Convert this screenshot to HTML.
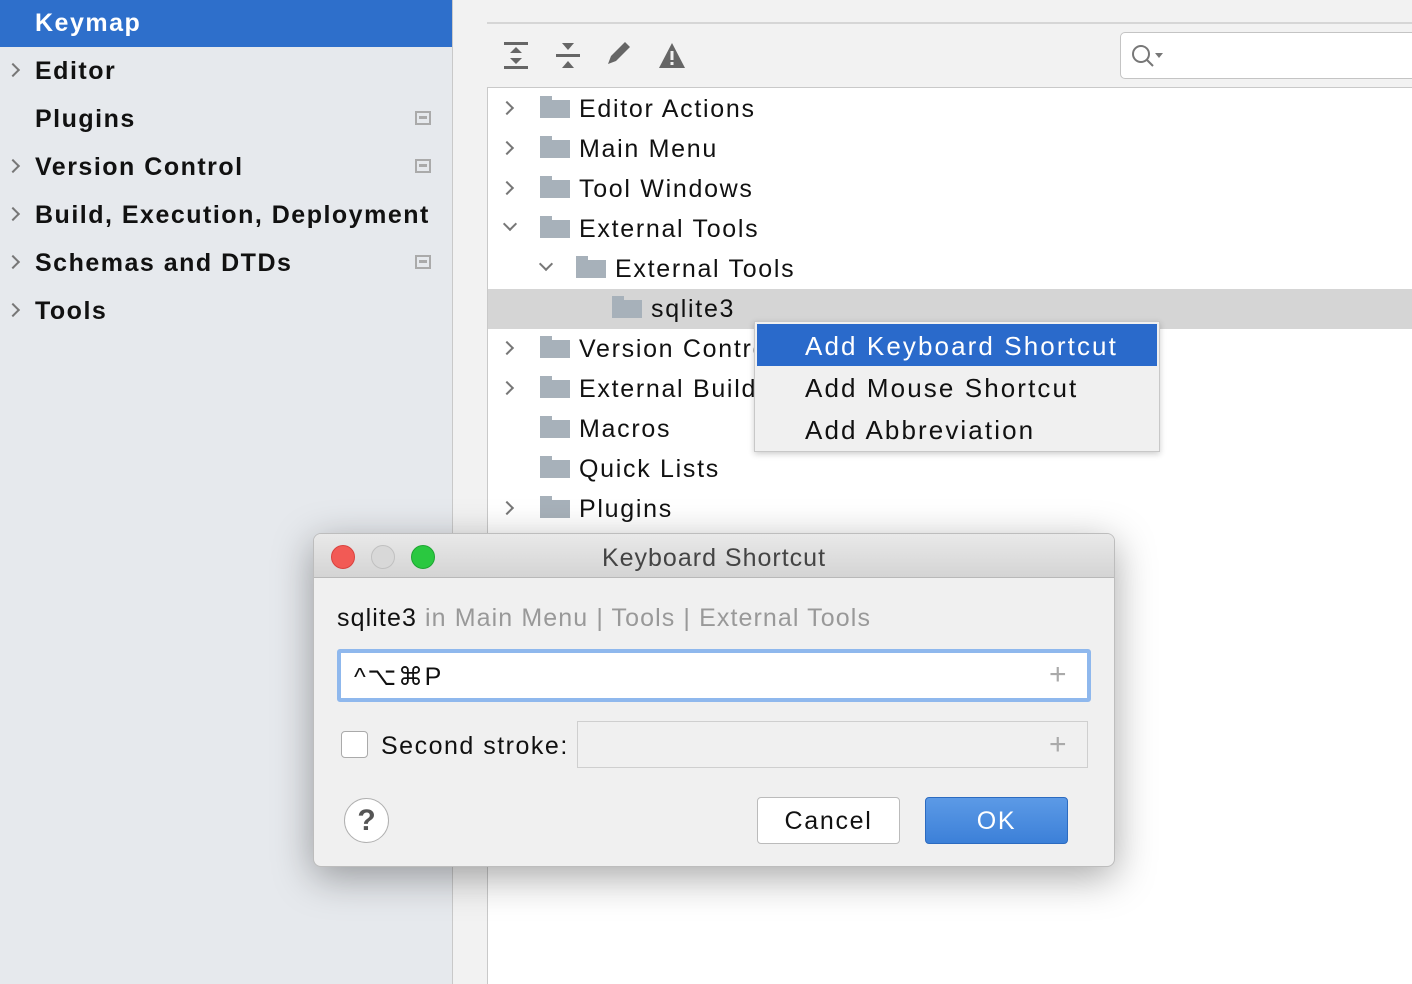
<!DOCTYPE html>
<html><head><meta charset="utf-8"><style>
*{margin:0;padding:0;box-sizing:border-box}
body{width:1412px;height:984px;overflow:hidden;background:#f2f2f2;font-family:"Liberation Sans","DejaVu Sans",sans-serif;position:relative}
.side{position:absolute;left:0;top:0;width:453px;height:984px;background:#e6e9ed;border-right:1px solid #c9c9c9}
.si{position:absolute;left:35px;font-size:25px;font-weight:bold;color:#111;letter-spacing:1.5px}
.arr{position:absolute;left:8px;width:10px;height:10px;border-right:2px solid #777;border-top:2px solid #777;transform:rotate(45deg)}
.mini{position:absolute;left:415px;width:16px;height:14px;border:2px solid #aaa}
.mini:after{content:"";position:absolute;left:2px;top:3px;width:8px;height:3px;background:#aaa}
.tree{position:absolute;left:487px;top:87px;width:925px;height:897px;background:#fff;border-left:1px solid #c9c9c9;border-top:1px solid #c9c9c9}
.row{position:absolute;font-size:25px;color:#111;letter-spacing:1.7px}
.fold{position:absolute;width:30px;height:24px}
.fold:before{content:"";position:absolute;left:0;top:0;width:12px;height:5px;background:#a7b1ba}
.fold:after{content:"";position:absolute;left:0;top:4px;width:30px;height:18px;background:#a7b1ba}
.ch{position:absolute;width:10px;height:10px;border-right:2px solid #777;border-top:2px solid #777;transform:rotate(45deg)}
.chd{transform:rotate(135deg)}
</style></head><body>
<div class="side">
<div style="position:absolute;left:0;top:0;width:452px;height:47px;background:#2e6fcb"></div>
<div class="si" style="top:9px;color:#fff">Keymap</div>
<div class="arr" style="top:65px"></div><div class="si" style="top:57px">Editor</div>
<div class="si" style="top:105px">Plugins</div><div class="mini" style="top:111px"></div>
<div class="arr" style="top:161px"></div><div class="si" style="top:153px">Version Control</div><div class="mini" style="top:159px"></div>
<div class="arr" style="top:209px"></div><div class="si" style="top:201px">Build, Execution, Deployment</div>
<div class="arr" style="top:257px"></div><div class="si" style="top:249px">Schemas and DTDs</div><div class="mini" style="top:255px"></div>
<div class="arr" style="top:305px"></div><div class="si" style="top:297px">Tools</div>
</div>
<div style="position:absolute;left:487px;top:22px;width:925px;height:2px;background:#d6d6d6"></div>
<svg style="position:absolute;left:500px;top:40px" width="190" height="32" viewBox="0 0 190 32" fill="#666">
<rect x="4" y="2" width="24" height="3"/><rect x="4" y="26" width="24" height="3"/><path d="M10 13l6-6 6 6zM10 18l6 6 6-6z"/>
<rect x="56" y="14" width="24" height="3"/><path d="M62 3l6 7 6-7zM62 28l6-7 6 7z"/>
<path d="M108 24l3-8 14-14 5 5-14 14z"/>
<path d="M172 3l13 25h-26z"/><rect x="170.5" y="11" width="3" height="9" fill="#f2f2f2"/><rect x="170.5" y="22" width="3" height="3" fill="#f2f2f2"/>
</svg>
<div style="position:absolute;left:1120px;top:32px;width:300px;height:47px;background:#fff;border:1px solid #c4c4c4;border-radius:5px"></div>
<svg style="position:absolute;left:1130px;top:42px" width="40" height="28"><circle cx="11" cy="12" r="8" fill="none" stroke="#777" stroke-width="2"/><path d="M17 18l6 6" stroke="#777" stroke-width="2"/><path d="M25 11h8l-4 5z" fill="#777"/></svg>
<div class="tree">
<div style="position:absolute;left:0;top:201px;width:925px;height:40px;background:#d5d5d5"></div>
</div>
<div class="ch" style="left:502px;top:103px"></div><div class="fold" style="left:540px;top:96px"></div><div class="row" style="left:579px;top:95px">Editor Actions</div>
<div class="ch" style="left:502px;top:143px"></div><div class="fold" style="left:540px;top:136px"></div><div class="row" style="left:579px;top:135px">Main Menu</div>
<div class="ch" style="left:502px;top:183px"></div><div class="fold" style="left:540px;top:176px"></div><div class="row" style="left:579px;top:175px">Tool Windows</div>
<div class="ch chd" style="left:505px;top:219px"></div><div class="fold" style="left:540px;top:216px"></div><div class="row" style="left:579px;top:215px">External Tools</div>
<div class="ch chd" style="left:541px;top:259px"></div><div class="fold" style="left:576px;top:256px"></div><div class="row" style="left:615px;top:255px">External Tools</div>
<div class="fold" style="left:612px;top:296px"></div><div class="row" style="left:651px;top:295px">sqlite3</div>
<div class="ch" style="left:502px;top:343px"></div><div class="fold" style="left:540px;top:336px"></div><div class="row" style="left:579px;top:335px">Version Control</div>
<div class="ch" style="left:502px;top:383px"></div><div class="fold" style="left:540px;top:376px"></div><div class="row" style="left:579px;top:375px">External Build</div>
<div class="fold" style="left:540px;top:416px"></div><div class="row" style="left:579px;top:415px">Macros</div>
<div class="fold" style="left:540px;top:456px"></div><div class="row" style="left:579px;top:455px">Quick Lists</div>
<div class="ch" style="left:502px;top:503px"></div><div class="fold" style="left:540px;top:496px"></div><div class="row" style="left:579px;top:495px">Plugins</div>
<div style="position:absolute;left:754px;top:321px;width:406px;height:131px;background:#f0f0f0;border:1px solid #c8c8c8;box-shadow:0 2px 6px rgba(0,0,0,.2)">
<div style="position:absolute;left:2px;top:2px;width:400px;height:42px;background:#2a6acb"></div>
<div class="row" style="left:50px;top:9px;color:#fff;font-size:26px;letter-spacing:2.1px">Add Keyboard Shortcut</div>
<div class="row" style="left:50px;top:51px;font-size:26px;letter-spacing:2.1px">Add Mouse Shortcut</div>
<div class="row" style="left:50px;top:93px;font-size:26px;letter-spacing:2.1px">Add Abbreviation</div>
</div>
<div style="position:absolute;left:313px;top:533px;width:802px;height:334px;background:#f0f0f0;border:1px solid #bdbdbd;border-radius:8px;box-shadow:0 10px 40px rgba(0,0,0,.35);overflow:hidden">
<div style="position:absolute;left:0;top:0;width:802px;height:44px;background:linear-gradient(#e9e9e9,#d4d4d4);border-bottom:1px solid #b8b8b8"></div>
<div style="position:absolute;left:17px;top:11px;width:24px;height:24px;border-radius:50%;background:#f25a55;border:1px solid #d9423e"></div>
<div style="position:absolute;left:57px;top:11px;width:24px;height:24px;border-radius:50%;background:#d8d8d8;border:1px solid #c0c0c0"></div>
<div style="position:absolute;left:97px;top:11px;width:24px;height:24px;border-radius:50%;background:#2ac840;border:1px solid #1ea532"></div>
<div class="row" style="left:0;width:800px;text-align:center;top:10px;color:#444;letter-spacing:1px">Keyboard Shortcut</div>
<div class="row" style="left:23px;top:70px;letter-spacing:1.1px">sqlite3 <span style="color:#999">in Main Menu | Tools | External Tools</span></div>
<div style="position:absolute;left:23px;top:115px;width:754px;height:53px;background:#fff;border:4px solid #8fb8ed;border-radius:3px"></div>
<div class="row" style="left:40px;top:128px">^⌥⌘P</div>
<div class="row" style="left:735px;top:124px;color:#aaa;font-size:30px">+</div>
<div style="position:absolute;left:27px;top:197px;width:27px;height:27px;background:#fff;border:1px solid #aaa;border-radius:4px"></div>
<div class="row" style="left:67px;top:198px;letter-spacing:1.5px">Second stroke:</div>
<div style="position:absolute;left:263px;top:187px;width:511px;height:47px;background:#f0f0f0;border:1px solid #cfcfcf"></div>
<div class="row" style="left:735px;top:194px;color:#aaa;font-size:30px">+</div>
<div style="position:absolute;left:30px;top:264px;width:45px;height:45px;border-radius:50%;background:#fff;border:1px solid #b0b0b0;font-size:30px;font-weight:bold;color:#555;text-align:center;line-height:43px">?</div>
<div style="position:absolute;left:443px;top:263px;width:143px;height:47px;background:#fff;border:1px solid #bbb;border-radius:4px"></div>
<div class="row" style="left:443px;width:143px;text-align:center;top:273px">Cancel</div>
<div style="position:absolute;left:611px;top:263px;width:143px;height:47px;background:linear-gradient(#5c9ae6,#3c80d8);border:1px solid #2c6bc0;border-radius:4px"></div>
<div class="row" style="left:611px;width:143px;text-align:center;top:273px;color:#fff">OK</div>
</div>
</body></html>
